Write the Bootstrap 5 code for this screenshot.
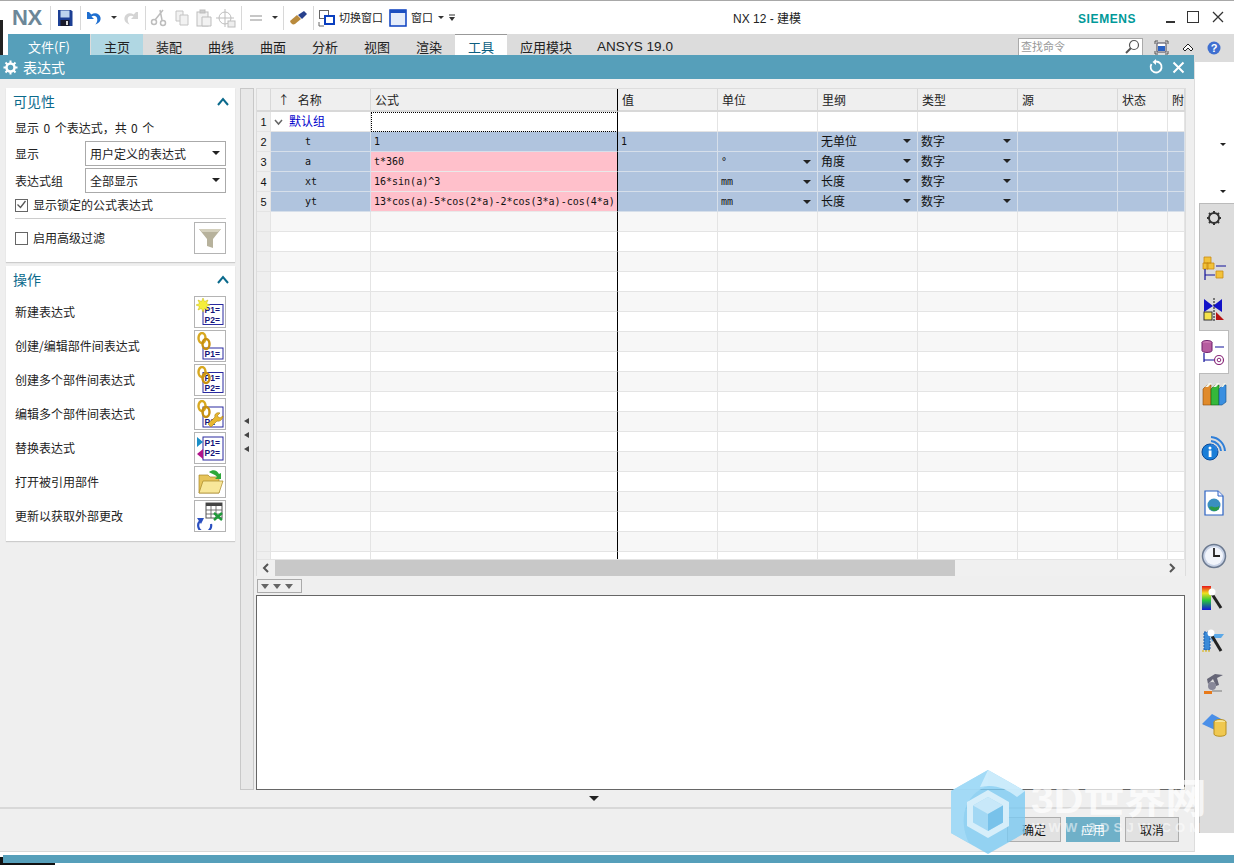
<!DOCTYPE html>
<html lang="zh">
<head>
<meta charset="utf-8">
<title>NX 12 - 建模</title>
<link rel="stylesheet" href="https://cdn.jsdelivr.net/npm/bootstrap@5.3.0/dist/css/bootstrap.min.css">
<style>
html,body{margin:0;background:#fff;overflow:hidden}
body{font-family:"Noto Sans CJK SC","Liberation Sans",sans-serif;font-size:12px;color:#222}
.stage{width:1234px;height:865px;overflow:hidden;background:#fff}
.nxwin{padding-left:3px;height:865px;border-top:1px solid #a8a8a8}
.edge-black{left:0;top:20px;width:3px;height:35px;background:#222}
.qat{height:33px;padding-left:9px;color:#222;font-size:11px}
.nxlogo{font:bold 22px "Liberation Sans",sans-serif;color:#6d8798;width:34px;letter-spacing:-.5px}
.qsep{width:1px;height:24px;background:#d8d8d8;margin:0 3px 0 4px;flex:none}
.qi{width:22px;height:22px;flex:none}
.qd{width:0;height:0;border-left:3px solid transparent;border-right:3px solid transparent;border-top:3px solid #333;margin:0 2px 0 5px;flex:none}
.qd-n{margin-right:1px}
.qtight{margin-left:-2px}
.qgap{margin-left:2px}
.qgap4{margin-left:4px}
.wintitle{left:733px;top:10px;font-size:12px;font-family:"Liberation Sans","Noto Sans CJK SC",sans-serif}
.siemens{left:1078px;top:12px;font:bold 12px "Liberation Sans",sans-serif;color:#099;letter-spacing:.6px}
.winbtn{top:10px;width:14px;height:14px}
.wb1{left:1164px}.wb2{left:1186px}.wb3{left:1211px}
.ribbon{height:28px;background:#dcdcdc;margin-left:5px;padding-bottom:7px;font-size:13px}
.rtab{height:21px;width:52px;text-align:center;line-height:25px;flex:none}
.rtab-file{width:82px;background:#569fba;color:#fff;height:21px}
.rtab-home{background:#b0d7e3;margin-left:1px}
.rtab-on{background:#fff;border-top:1px solid #999;color:#0b5e7f;line-height:23px}
.rtab-wide{width:78px}
.rtab-ansys{width:100px;font-family:"Liberation Sans",sans-serif;font-size:13.500px}
.findbox{left:1018px;top:38px;width:125px;height:18px;border:1px solid #aaa;background:#fff;color:#999;font-size:11px;line-height:15px;padding-left:2px}
.fb-ic{right:2px;top:0}
.ic-a{left:1154px;top:40px}.ic-b{left:1181px;top:43px}.ic-c{left:1207px;top:41px}
.rbar{width:35px}
.rbar-top{height:141px;position:relative}
.rmark{position:absolute;right:8px;width:0;height:0;border-left:3px solid transparent;border-right:3px solid transparent;border-top:3px solid #222}
.rm1{top:81px}.rm2{top:128px}
.rbar-list{background:#dcdcdc;border-top:1px solid #bbb;border-left:1px solid #bbb;height:630px}
.ri{height:28px;display:flex;align-items:center;justify-content:center;padding-right:6px}
.ri svg{width:26px;height:26px}
.ri:nth-child(2){margin-top:23px}.ri:nth-child(3){margin-top:13px}
.ri:nth-child(4){margin-top:6px;height:44px;background:#fff;border:1px solid #bbb;border-left:0;margin-right:5px;padding-right:1px;margin-left:-1px}
.ri:nth-child(5){margin-top:7px}.ri:nth-child(6){margin-top:25px}.ri:nth-child(7){margin-top:27px}
.ri:nth-child(8){margin-top:25px}.ri:nth-child(9){margin-top:14px}.ri:nth-child(10){margin-top:15px}
.ri:nth-child(11){margin-top:13px}.ri:nth-child(12){margin-top:14px}

.dlg{left:0;top:55px;width:1195px;height:797px;background:#efefef;border-right:1px solid #ddd;border-bottom:1px solid #d8d8d8}
.dlg-title{height:24px;background:#569fba;color:#fff;font-size:14px;padding:0 9px 0 2px}
.dlg-main{height:711px;padding:9px 0 0 6px}
.panelcol{width:229px;gap:4px}
.pcard{border:0;border-radius:0;box-shadow:0 1px 1px #ccc;background:#fff}
.pc1{height:174px}.pc2{height:275px}
.phead{height:26px;font-size:14px;color:#0b6a8c;padding:0 6px 0 7px}
.pbody{padding:0 9px}
.sumline{padding-top:5px;margin-bottom:4px;word-spacing:1.800px}
.lbl{width:70px;flex:none}
.selrow{margin-bottom:2px}
.selbox.form-select{width:141px;height:25px;min-height:0;border:1px solid #aaa;border-radius:0;padding:0 0 0 4px;font-size:12px;color:#222;background-image:none;line-height:23px;box-shadow:none}
.selwrap{position:relative}
.selwrap::after{content:"";position:absolute;right:6px;top:10px;border-left:4px solid transparent;border-right:4px solid transparent;border-top:4px solid #222;pointer-events:none}
.cbx.form-check-input{width:13px;height:13px;margin:0 5px 0 0;border:1px solid #666;border-radius:0;float:none;background-color:#fff;flex:none}
.cbx.form-check-input:checked{background-color:#fff;border-color:#666;background-image:none}
.rowlock{position:relative;margin-top:3px}
.ticksvg{position:absolute;left:1px;top:3px;width:11px;height:11px}
.pdiv{border-top:1px solid #ccc;margin:4px 0 3px}
.actbtn.btn{width:32px;height:32px;padding:0;border:1px solid #b4b4b4;border-radius:0;background:#fff;flex:none;display:flex;align-items:center;justify-content:center}
.actbtn svg{width:28px;height:28px}
.actbtn text{font:bold 8.500px "Liberation Sans",sans-serif;fill:#14147a}
.actrow{height:32px;margin-bottom:2px}
.splitter{width:14px;height:702px;margin:0 2px 0 5px;background:#e8e8e8;border:1px solid #c8c8c8;padding-top:329px;gap:8px}
.spl{width:0;height:0;border-top:3.500px solid transparent;border-bottom:3.500px solid transparent;border-right:5px solid #444;margin-left:3px}
.rightcol{width:930px}
.gridbox{height:488px;border:1px solid #ddd;background:#fff}
.gridscroll{height:470px;overflow:hidden}
.xtbl.table{width:928px;table-layout:fixed;border-collapse:separate;border-spacing:0;margin:0;--bs-table-bg:transparent;font-family:"DejaVu Sans Mono","Noto Sans CJK SC",monospace;font-size:10px;color:#111}
.xtbl th,.xtbl td{height:20px;padding:1px 3px 0;border:0;border-right:1px solid #e4e4e4;border-bottom:1px solid #e4e4e4;vertical-align:middle;white-space:nowrap;overflow:hidden;box-shadow:none;line-height:16px;font-weight:400}
.xtbl thead th{height:23px;padding:0 3px 0 4px;background:#efefef;font-family:"Noto Sans CJK SC",sans-serif;font-size:12px;color:#222;border-bottom:2px solid #d8d8d8;border-right:1px solid #d8d8d8}
.xtbl tbody th{background:#efefef;text-align:center;font-family:"Liberation Sans",sans-serif;font-size:11px;padding:0}
.xtbl .c-f{border-right:1px solid #000}
.xtbl tr.em:nth-child(even) td{background:#f7f7f7}
.xtbl td.nm{padding-left:34px}
.xtbl td.blu{background:#b0c4de;border-color:#d6dfea}
.xtbl td.pnk{background:#ffc0cb;border-bottom-color:#e9e9e9}
.xtbl td.c-f{border-right-color:#000}
.c0{width:14px}.c1{width:100px}.c2{width:247px}.c3{width:100px}.c4{width:100px}.c5{width:100px}.c6{width:100px}.c7{width:100px}.c8{width:50px}.c9{width:17px}
.xtbl td.grp{font-family:"Noto Sans CJK SC",sans-serif;font-size:12px;color:#00c;padding:0 3px 1px}
.grp-ch{margin-right:6px}
.xtbl td.zh{font-family:"Noto Sans CJK SC",sans-serif;font-size:12px;padding:0 3px 1px}
.xtbl td.dot{outline:1px dotted #000;outline-offset:-1px}
.dd{position:relative;display:block}
.dd::after{content:"";position:absolute;right:3px;top:6px;border-left:4px solid transparent;border-right:4px solid transparent;border-top:4px solid #222}
.hscroll{height:17px;background:#f0f0f0;padding:0 4px 0 0;border-top:1px solid #e4e4e4}
.hthumb{height:16px;width:680px;background:#c8c8c8}
.harrow{width:18px;color:#555;text-align:center;flex:none;line-height:0}
.hflex{flex:1}
.togbtn{width:45px;height:14px;margin:3px 0 2px 1px;border:1px solid #aaa;gap:4px;padding-left:3px;background:#efefef}
.tgl{width:0;height:0;border-left:4px solid transparent;border-right:4px solid transparent;border-top:5px solid #666}
.notes.form-control{flex:1;border:1px solid #666;background:#fff;margin:0;border-radius:0;width:929px;padding:0;box-shadow:none;resize:none;min-height:0}
.dlg-expand{height:17px;width:100%;padding-right:6px}
.expt{width:0;height:0;border-left:5px solid transparent;border-right:5px solid transparent;border-top:5px solid #222}
.dlg-foot{border-top:2px solid #d8d8d8;padding:8px 15px 0 0;gap:5px}
.dbtn.btn{width:54px;height:25px;border:1px solid #adadad;background:#e1e1e1;color:#111;border-radius:0;padding:0;font-size:12px;line-height:22px}
.dbtn-pri.btn{background:#6fb0c8;border-color:#6fb0c8;color:#fff}
.wm{left:950px;top:770px;width:262px;height:84px;pointer-events:none}
.wm-hex{width:76px;height:84px;display:block}
.wm-txt{left:81px;top:9px;font:bold 41px "Liberation Sans","Noto Sans CJK SC",sans-serif;color:rgba(255,255,255,.72);white-space:nowrap;line-height:40px}
.wm-url{left:82px;top:50px;font:bold 13px "Liberation Sans",sans-serif;letter-spacing:4.200px;color:rgba(255,255,255,.55);white-space:nowrap}
.tstrip{left:3px;right:0;top:855px;height:8px;background:#569fba}
.tblack{left:0;top:857px;width:3px;height:8px;background:#111}
.tblack2{left:0;top:863px;width:55px;height:2px;background:#111}
</style>
</head>
<body>
<div class="stage position-relative">
  <div class="edge-black position-absolute"></div>

  <div class="nxwin d-flex flex-column">
    <!-- quick access toolbar -->
    <div class="qat d-flex align-items-center">
      <div class="nxlogo">NX</div>
      <div class="qsep"></div>
      <svg class="qi" viewBox="0 0 22 22"><path d="M4 3h13l1.500 1.500V19H4z" fill="#1c3f94"/><rect x="6.500" y="3.500" width="9" height="7" fill="#bcd3ee"/><rect x="6.500" y="13" width="9" height="6" fill="#1a1a2a"/><rect x="12" y="14" width="2" height="4" fill="#ddd"/></svg>
      <div class="qsep"></div>
      <svg class="qi" viewBox="0 0 22 22"><path d="M3 5v7h7L7.500 9.500c2.700-1.700 5.700-.2 5.800 2.900.1 2-.8 3.700-2 5.100 3.900-1.200 5.800-3.900 5.200-7C15.800 6.500 11 4.800 7.300 7.400L5 5z" fill="#1f6fd0"/></svg>
      <div class="qd"></div>
      <svg class="qi" viewBox="0 0 22 22"><path d="M19 5v7h-7l2.500-2.500c-2.700-1.700-5.700-.2-5.800 2.900-.1 2 .8 3.700 2 5.100-3.900-1.200-5.800-3.900-5.200-7 .7-4 5.500-5.700 9.200-3.100L17 5z" fill="#d4d4d4"/></svg>
      <div class="qsep"></div>
      <svg class="qi qtight" viewBox="0 0 22 22" fill="none" stroke="#bdbdbd" stroke-width="1.500"><path d="M16 3L8 13M13 3l2 10"/><circle cx="7" cy="15" r="2.500"/><circle cx="16" cy="16" r="2.500"/></svg>
      <svg class="qi qgap" viewBox="0 0 22 22" fill="#f2f2f2" stroke="#c4c4c4"><path d="M5 4h7v10H5z"/><path d="M9 8h8v10H9z"/></svg>
      <svg class="qi" viewBox="0 0 22 22" fill="#f2f2f2" stroke="#bdbdbd"><rect x="4" y="5" width="11" height="14"/><rect x="7" y="3" width="5" height="3" fill="#ccc"/><path d="M9 10h9v9H9z"/></svg>
      <svg class="qi" viewBox="0 0 22 22" fill="none" stroke="#bdbdbd"><circle cx="10" cy="11" r="6"/><path d="M10 2v18M1 11h18"/><rect x="13" y="14" width="7" height="6" fill="#eee"/></svg>
      <div class="qsep"></div>
      <svg class="qi" viewBox="0 0 22 22" fill="none" stroke="#b5b5b5" stroke-width="1.500"><path d="M5 9h12M5 13h12"/></svg>
      <div class="qd qd-n"></div>
      <div class="qsep"></div>
      <svg class="qi" viewBox="0 0 22 22"><path d="M3 14l7-6 4 4-6 5c-2 1-4 0-5-3z" fill="#b98a3c"/><path d="M11 8l6-4 3 3-5 5z" fill="#28408c"/></svg>
      <div class="qsep"></div>
      <svg class="qi" viewBox="0 0 22 22"><rect x="2.500" y="3.500" width="9" height="8" fill="#fff" stroke="#666"/><rect x="8" y="9" width="9" height="8" fill="#fff" stroke="#0a3fc0" stroke-width="2"/><path d="M2 15v4h5" fill="none" stroke="#666"/></svg>
      <span>切换窗口</span>
      <svg class="qi qgap4" viewBox="0 0 22 22"><rect x="3" y="3" width="16" height="16" fill="#e4ecfa" stroke="#0a3fc0" stroke-width="1.500"/><rect x="3" y="3" width="16" height="3" fill="#1b4fc0"/></svg>
      <span class="qgap">窗口</span>
      <div class="qd"></div>
      <svg class="qgap" width="8" height="8" viewBox="0 0 8 8"><path d="M1 1h6" stroke="#333"/><path d="M1 3h6L4 7z" fill="#333"/></svg>
    </div>
    <!-- ribbon -->
    <div class="ribbon d-flex align-items-start">
      <div class="rtab rtab-file">文件(F)</div>
      <div class="rtab rtab-home">主页</div>
      <div class="rtab">装配</div>
      <div class="rtab">曲线</div>
      <div class="rtab">曲面</div>
      <div class="rtab">分析</div>
      <div class="rtab">视图</div>
      <div class="rtab">渲染</div>
      <div class="rtab rtab-on">工具</div>
      <div class="rtab rtab-wide">应用模块</div>
      <div class="rtab rtab-ansys">ANSYS 19.0</div>
    </div>
    <!-- resource bar -->
    <div class="d-flex justify-content-end flex-grow-1">
      <div class="rbar d-flex flex-column">
        <div class="rbar-top"><span class="rmark rm1"></span><span class="rmark rm2"></span></div>
        <div class="rbar-list">
          <div class="ri"><svg viewBox="0 0 26 26"><circle cx="13" cy="13" r="5" fill="none" stroke="#333" stroke-width="2"/><path d="M13 6v3M13 17v3M6 13h3M17 13h3M8 8l2 2M16 16l2 2M8 18l2-2M16 10l2-2" stroke="#333" stroke-width="2"/></svg></div>
          <div class="ri"><svg viewBox="0 0 26 26"><path d="M3 1h7v6H3zM6 7h7v6H6zM2 7h5v6H2z" fill="#f2c23a" stroke="#c98a12" stroke-width=".8"/><path d="M15 15h7v7h-7z" fill="#f2c23a" stroke="#c98a12" stroke-width=".8"/><path d="M4 13v11M4 19h10M15 10h10" stroke="#12129a" stroke-width="1.200" fill="none"/></svg></div>
          <div class="ri"><svg viewBox="0 0 26 26"><path d="M3 2l9 7 9-7v13l-9-6-9 6z" fill="#1212c8"/><path d="M13 1v24" stroke="#111" stroke-dasharray="2 1"/><rect x="3" y="15" width="8" height="8" fill="#f6e44a" stroke="#333"/><path d="M15 15l8 8h-8z" fill="#b81414"/></svg></div>
          <div class="ri"><svg viewBox="0 0 26 26"><ellipse cx="7" cy="3.500" rx="5" ry="2" fill="#d883bd" stroke="#6b1d6b"/><path d="M2 3.500v8c0 2.600 10 2.600 10 0v-8" fill="#b65ca0" stroke="#6b1d6b"/><path d="M4 14v9M4 21h10M15 8h9" stroke="#12129a" stroke-width="1.200" fill="none"/><circle cx="19" cy="21" r="4.500" fill="none" stroke="#8a2a7a" stroke-width="1.200"/><circle cx="19" cy="21" r="1.800" fill="none" stroke="#8a2a7a"/></svg></div>
          <div class="ri"><svg viewBox="0 0 26 26"><path d="M2 7l4-4h4v20H2z" fill="#e08a2a" stroke="#8a4a0a" stroke-width=".6"/><path d="M10 7l4-4h4v20h-8z" fill="#35b83a" stroke="#126012" stroke-width=".6"/><path d="M18 7l4-4h3v17l-4 3h-3z" fill="#3a8fe0" stroke="#12508a" stroke-width=".6"/><path d="M4 5l4-4h3L7 5zM12 5l4-4h3l-4 4zM20 5l3-4h2l-3 4z" fill="#f4f4e8"/></svg></div>
          <div class="ri"><svg viewBox="0 0 26 26"><circle cx="9" cy="17" r="8" fill="#1a7ed8" stroke="#0a4a9a"/><circle cx="9" cy="13" r="1.500" fill="#fff"/><rect x="7.700" y="15.500" width="2.800" height="6.500" fill="#fff"/><path d="M10 6a11 11 0 0 1 10 10M10 2a15 15 0 0 1 14 14M10 10a7 7 0 0 1 6 6" fill="none" stroke="#2f7fd8" stroke-width="2"/></svg></div>
          <div class="ri"><svg viewBox="0 0 26 26"><path d="M4 1h13l5 5v19H4z" fill="#fff" stroke="#2a62c4" stroke-width="1.200"/><path d="M17 1v5h5" fill="#eef" stroke="#2a62c4"/><circle cx="13" cy="15" r="6.500" fill="#3a8fc0"/><path d="M8 17c3-2 6 2 10-1v3c-3 3-8 3-10-2z" fill="#2c9a48"/></svg></div>
          <div class="ri"><svg viewBox="0 0 26 26"><circle cx="13" cy="13" r="11.500" fill="#c9d3e6" stroke="#6c7a90" stroke-width="1.500"/><circle cx="13" cy="13" r="9" fill="#f2f5fb"/><path d="M13 5v8h6" fill="none" stroke="#222" stroke-width="1.800"/></svg></div>
          <div class="ri"><svg viewBox="0 0 26 26"><defs><linearGradient id="rb" x1="0" y1="0" x2="0" y2="1"><stop offset="0" stop-color="#e8141a"/><stop offset=".3" stop-color="#f0e020"/><stop offset=".6" stop-color="#28c83a"/><stop offset="1" stop-color="#1414d8"/></linearGradient></defs><rect x="1" y="1" width="9" height="24" fill="url(#rb)"/><path d="M11 9l9 14" stroke="#222" stroke-width="3"/><circle cx="11" cy="7" r="3.500" fill="#fff"/></svg></div>
          <div class="ri"><svg viewBox="0 0 26 26"><path d="M3 4h6v18H3z" fill="#3a8ad8" stroke="#1a5aa8" stroke-dasharray="2 1"/><path d="M9 6h14l-3 4h-6l-3 4z" fill="#5aa8e8"/><path d="M11 8l9 15" stroke="#222" stroke-width="3"/><circle cx="10" cy="5" r="3.500" fill="#fff"/><path d="M1 23h9" stroke="#e0c040" stroke-width="1.500" stroke-dasharray="2 1"/></svg></div>
          <div class="ri"><svg viewBox="0 0 26 26"><path d="M6 10l8-5 8 1-6 3 2 7-3 1-3-7-5 5z" fill="#667"/><circle cx="11" cy="17" r="4" fill="#889"/><path d="M3 22h8v3H3z" fill="#e87a1a"/><path d="M11 22h10" stroke="#aaa" stroke-width="2"/></svg></div>
          <div class="ri"><svg viewBox="0 0 26 26"><path d="M1 13L11 3l11 6-8 10z" fill="#4a8fe8"/><ellipse cx="19" cy="11" rx="6" ry="2.500" fill="#f8e69a" stroke="#b89020"/><path d="M13 11v12c0 3 12 3 12 0V11" fill="#f0c850" stroke="#b89020"/></svg></div>
        </div>
      </div>
    </div>
  </div>

  <div class="wintitle position-absolute">NX 12 - 建模</div>
  <div class="siemens position-absolute">SIEMENS</div>
  <svg class="winbtn wb1 position-absolute" viewBox="0 0 14 14"><path d="M2 12h9" stroke="#333" stroke-width="2"/></svg>
  <svg class="winbtn wb2 position-absolute" viewBox="0 0 14 14"><rect x="1.500" y="1.500" width="11" height="11" fill="none" stroke="#333"/></svg>
  <svg class="winbtn wb3 position-absolute" viewBox="0 0 14 14"><path d="M2 2l10 10M12 2L2 12" stroke="#333" stroke-width="1.300"/></svg>
  <div class="findbox position-absolute">查找命令
    <svg class="fb-ic position-absolute" width="16" height="16" viewBox="0 0 16 16"><circle cx="10" cy="6" r="4.500" fill="#fff" stroke="#555" stroke-width="1.200"/><path d="M7 9l-5 5" stroke="#555" stroke-width="2"/></svg>
  </div>
  <svg class="ic-a position-absolute" width="15" height="15" viewBox="0 0 15 15"><path d="M1 4V1h3M11 1h3v3M14 11v3h-3M4 14H1v-3" fill="none" stroke="#555"/><rect x="3" y="3" width="9" height="9" fill="#fff" stroke="#445"/><rect x="4" y="6" width="7" height="5" fill="#2a62c4"/></svg>
  <svg class="ic-b position-absolute" width="14" height="12" viewBox="0 0 14 12"><path d="M2 6l5-5 5 5-2 2-3-3-3 3z" fill="#fff" stroke="#222"/></svg>
  <svg class="ic-c position-absolute" width="14" height="14" viewBox="0 0 14 14"><circle cx="7" cy="7" r="6.500" fill="#3f6fd0"/><text x="7" y="11" font-size="11" font-weight="700" fill="#fff" text-anchor="middle" font-family="Liberation Sans">?</text></svg>

  <!-- dialog -->
  <div class="dlg position-absolute d-flex flex-column">
    <div class="dlg-title d-flex align-items-center">
      <svg width="17" height="17" viewBox="0 0 17 17"><circle cx="8.500" cy="8.500" r="4" fill="none" stroke="#fff" stroke-width="2.500"/><path d="M8.500 1.500v3M8.500 12.500v3M1.500 8.500h3M12.500 8.500h3M3.500 3.500l2 2M11.500 11.500l2 2M3.500 13.500l2-2M11.500 5.500l2-2" stroke="#fff" stroke-width="2"/></svg>
      <span class="ms-1">表达式</span>
      <svg class="ms-auto" width="16" height="16" viewBox="0 0 16 16"><path d="M3.500 5A5.500 5.500 0 1 0 8 2.500" fill="none" stroke="#fff" stroke-width="1.800"/><path d="M8 0v6L4.500 3z" fill="#fff"/></svg>
      <svg class="ms-2" width="13" height="13" viewBox="0 0 13 13"><path d="M1.500 1.500l10 10M11.500 1.500l-10 10" stroke="#fff" stroke-width="2"/></svg>
    </div>

    <div class="dlg-main d-flex">
      <div class="panelcol d-flex flex-column">
        <div class="card pcard pc1">
          <div class="phead d-flex align-items-center justify-content-between">
            <span>可见性</span>
            <svg width="12" height="9" viewBox="0 0 12 9"><path d="M1 8l5-6 5 6" fill="none" stroke="#0b6a8c" stroke-width="2"/></svg>
          </div>
          <div class="pbody">
            <div class="sumline">显示 0 个表达式，共 0 个</div>
            <div class="d-flex align-items-center selrow"><span class="lbl">显示</span><div class="selwrap"><select class="form-select selbox"><option>用户定义的表达式</option></select></div></div>
            <div class="d-flex align-items-center"><span class="lbl">表达式组</span><div class="selwrap"><select class="form-select selbox"><option>全部显示</option></select></div></div>
            <div class="d-flex align-items-center rowlock">
              <input class="form-check-input cbx" type="checkbox" checked>
              <svg class="ticksvg" viewBox="0 0 11 11"><path d="M1.500 5.500l3 3 5-6.500" fill="none" stroke="#555" stroke-width="1.300"/></svg>
              <span>显示锁定的公式表达式</span>
            </div>
            <div class="pdiv"></div>
            <div class="d-flex align-items-center justify-content-between">
              <div class="d-flex align-items-center"><input class="form-check-input cbx" type="checkbox"><span>启用高级过滤</span></div>
              <button class="btn actbtn" type="button"><svg viewBox="0 0 28 28"><path d="M3 5h22l-8 10v9l-6-2v-7z" fill="#b7b29c"/><path d="M3 5h22l-3 3H6z" fill="#d4d0bd"/></svg></button>
            </div>
          </div>
        </div>
        <div class="card pcard pc2">
          <div class="phead d-flex align-items-center justify-content-between">
            <span>操作</span>
            <svg width="12" height="9" viewBox="0 0 12 9"><path d="M1 8l5-6 5 6" fill="none" stroke="#0b6a8c" stroke-width="2"/></svg>
          </div>
          <div class="pbody pt-1">
            <div class="actrow d-flex align-items-center justify-content-between"><span>新建表达式</span>
              <button class="btn actbtn" type="button"><svg viewBox="0 0 28 28"><rect x="7" y="6.500" width="20" height="20" fill="#fff" stroke="#2a2aa0"/><text x="8.500" y="15">P1=</text><text x="8.500" y="24.500">P2=</text><path d="M7 0l1.500 3.500L12 2l-1.500 3.500L14 7l-3.500 1.500L12 12 8.500 10.500 7 14 5.500 10.500 2 12l1.500-3.500L0 7l3.500-1.500L2 2l3.500 1.500z" fill="#f5ee3a" stroke="#c9b810" stroke-width=".5"/></svg></button></div>
            <div class="actrow d-flex align-items-center justify-content-between"><span>创建/编辑部件间表达式</span>
              <button class="btn actbtn" type="button"><svg viewBox="0 0 28 28"><rect x="7" y="16" width="20" height="11" fill="#fff" stroke="#2a2aa0"/><text x="8.500" y="25">P1=</text><ellipse cx="6" cy="6" rx="3.500" ry="5" fill="none" stroke="#d8a820" stroke-width="2.400"/><ellipse cx="10" cy="12" rx="3.500" ry="5" fill="none" stroke="#c89010" stroke-width="2.400"/></svg></button></div>
            <div class="actrow d-flex align-items-center justify-content-between"><span>创建多个部件间表达式</span>
              <button class="btn actbtn" type="button"><svg viewBox="0 0 28 28"><rect x="7" y="6.500" width="20" height="20" fill="#fff" stroke="#2a2aa0"/><text x="8.500" y="15">P1=</text><text x="8.500" y="24.500">P2=</text><ellipse cx="6" cy="6" rx="3.500" ry="5" fill="none" stroke="#d8a820" stroke-width="2.400"/><ellipse cx="10" cy="12" rx="3.500" ry="5" fill="none" stroke="#c89010" stroke-width="2.400"/></svg></button></div>
            <div class="actrow d-flex align-items-center justify-content-between"><span>编辑多个部件间表达式</span>
              <button class="btn actbtn" type="button"><svg viewBox="0 0 28 28"><rect x="7" y="7" width="20" height="20" fill="#fff" stroke="#2a2aa0"/><text x="8.500" y="25">P2</text><ellipse cx="6" cy="6" rx="3.500" ry="5" fill="none" stroke="#d8a820" stroke-width="2.400"/><ellipse cx="10" cy="12" rx="3.500" ry="5" fill="none" stroke="#c89010" stroke-width="2.400"/><path d="M12 24l7-7c-1-3 2-5 5-4l-3 3 3 2 3-2c0 3-3 6-6 5l-6 6z" fill="#e8b830" stroke="#a87a10" stroke-width=".6"/></svg></button></div>
            <div class="actrow d-flex align-items-center justify-content-between"><span>替换表达式</span>
              <button class="btn actbtn" type="button"><svg viewBox="0 0 28 28"><rect x="7" y="3" width="20" height="23" fill="#fff" stroke="#2a2aa0"/><text x="8.500" y="12">P1=</text><text x="8.500" y="22">P2=</text><path d="M1 3l6 5-6 5z" fill="#1a8fc8"/><path d="M7 15v10l-6-5z" fill="#b0128a"/></svg></button></div>
            <div class="actrow d-flex align-items-center justify-content-between"><span>打开被引用部件</span>
              <button class="btn actbtn" type="button"><svg viewBox="0 0 28 28"><path d="M3 7h9l2 2h9v16H3z" fill="#e6c45a" stroke="#a8882a" stroke-width=".7"/><path d="M3 25l4-12h20l-4 12z" fill="#f8e79a" stroke="#a8882a" stroke-width=".7"/><path d="M13 4c4-3 8-2 10 2l2-1v6h-6l2-2c-2-3-5-3-8-5z" fill="#2da83a"/></svg></button></div>
            <div class="actrow d-flex align-items-center justify-content-between"><span>更新以获取外部更改</span>
              <button class="btn actbtn" type="button"><svg viewBox="0 0 28 28"><rect x="10" y="1" width="16" height="15" fill="#fff" stroke="#555"/><path d="M10 1h16v3H10z" fill="#444"/><path d="M15 4v12M20 4v12M10 8h16M10 12h16" stroke="#555" stroke-width=".8"/><path d="M18 11l8 7M26 11l-8 7" stroke="#1f9a3a" stroke-width="2.400"/><path d="M15 22a6.500 6.500 0 1 1-11-3" fill="none" stroke="#2a4fc0" stroke-width="2.200"/><path d="M1 16h7l-3 6z" fill="#2a4fc0"/></svg></button></div>
          </div>
        </div>
      </div>

      <div class="splitter d-flex flex-column"><span class="spl"></span><span class="spl"></span><span class="spl"></span></div>

      <div class="rightcol d-flex flex-column">
        <div class="gridbox">
          <div class="gridscroll">
            <table class="table xtbl">
              <colgroup><col class="c0"><col class="c1"><col class="c2"><col class="c3"><col class="c4"><col class="c5"><col class="c6"><col class="c7"><col class="c8"><col class="c9"></colgroup>
              <thead><tr><th></th><th>&nbsp;<span class="me-2">↑</span>名称</th><th class="c-f">公式</th><th>值</th><th>单位</th><th>里纲</th><th>类型</th><th>源</th><th>状态</th><th>附</th></tr></thead>
              <tbody>
                <tr><th>1</th><td class="grp"><svg class="grp-ch" width="9" height="7" viewBox="0 0 9 7"><path d="M1 1l3.500 4L8 1" fill="none" stroke="#666" stroke-width="1.500"/></svg>默认组</td><td class="c-f dot"></td><td></td><td></td><td></td><td></td><td></td><td></td><td></td></tr>
                <tr><th>2</th><td class="blu nm">t</td><td class="blu c-f">1</td><td class="blu">1</td><td class="blu"></td><td class="blu zh"><span class="dd">无单位</span></td><td class="blu zh"><span class="dd">数字</span></td><td class="blu"></td><td class="blu"></td><td class="blu"></td></tr>
                <tr><th>3</th><td class="blu nm">a</td><td class="pnk c-f">t*360</td><td class="blu"></td><td class="blu"><span class="dd">°</span></td><td class="blu zh"><span class="dd">角度</span></td><td class="blu zh"><span class="dd">数字</span></td><td class="blu"></td><td class="blu"></td><td class="blu"></td></tr>
                <tr><th>4</th><td class="blu nm">xt</td><td class="pnk c-f">16*sin(a)^3</td><td class="blu"></td><td class="blu"><span class="dd">mm</span></td><td class="blu zh"><span class="dd">长度</span></td><td class="blu zh"><span class="dd">数字</span></td><td class="blu"></td><td class="blu"></td><td class="blu"></td></tr>
                <tr><th>5</th><td class="blu nm">yt</td><td class="pnk c-f">13*cos(a)-5*cos(2*a)-2*cos(3*a)-cos(4*a)</td><td class="blu"></td><td class="blu"><span class="dd">mm</span></td><td class="blu zh"><span class="dd">长度</span></td><td class="blu zh"><span class="dd">数字</span></td><td class="blu"></td><td class="blu"></td><td class="blu"></td></tr>
                <tr class="em"><th></th><td></td><td class="c-f"></td><td></td><td></td><td></td><td></td><td></td><td></td><td></td></tr>
                <tr class="em"><th></th><td></td><td class="c-f"></td><td></td><td></td><td></td><td></td><td></td><td></td><td></td></tr>
                <tr class="em"><th></th><td></td><td class="c-f"></td><td></td><td></td><td></td><td></td><td></td><td></td><td></td></tr>
                <tr class="em"><th></th><td></td><td class="c-f"></td><td></td><td></td><td></td><td></td><td></td><td></td><td></td></tr>
                <tr class="em"><th></th><td></td><td class="c-f"></td><td></td><td></td><td></td><td></td><td></td><td></td><td></td></tr>
                <tr class="em"><th></th><td></td><td class="c-f"></td><td></td><td></td><td></td><td></td><td></td><td></td><td></td></tr>
                <tr class="em"><th></th><td></td><td class="c-f"></td><td></td><td></td><td></td><td></td><td></td><td></td><td></td></tr>
                <tr class="em"><th></th><td></td><td class="c-f"></td><td></td><td></td><td></td><td></td><td></td><td></td><td></td></tr>
                <tr class="em"><th></th><td></td><td class="c-f"></td><td></td><td></td><td></td><td></td><td></td><td></td><td></td></tr>
                <tr class="em"><th></th><td></td><td class="c-f"></td><td></td><td></td><td></td><td></td><td></td><td></td><td></td></tr>
                <tr class="em"><th></th><td></td><td class="c-f"></td><td></td><td></td><td></td><td></td><td></td><td></td><td></td></tr>
                <tr class="em"><th></th><td></td><td class="c-f"></td><td></td><td></td><td></td><td></td><td></td><td></td><td></td></tr>
                <tr class="em"><th></th><td></td><td class="c-f"></td><td></td><td></td><td></td><td></td><td></td><td></td><td></td></tr>
                <tr class="em"><th></th><td></td><td class="c-f"></td><td></td><td></td><td></td><td></td><td></td><td></td><td></td></tr>
                <tr class="em"><th></th><td></td><td class="c-f"></td><td></td><td></td><td></td><td></td><td></td><td></td><td></td></tr>
                <tr class="em"><th></th><td></td><td class="c-f"></td><td></td><td></td><td></td><td></td><td></td><td></td><td></td></tr>
                <tr class="em"><th></th><td></td><td class="c-f"></td><td></td><td></td><td></td><td></td><td></td><td></td><td></td></tr>
                <tr class="em"><th></th><td></td><td class="c-f"></td><td></td><td></td><td></td><td></td><td></td><td></td><td></td></tr>
              </tbody>
            </table>
          </div>
          <div class="hscroll d-flex align-items-center">
            <div class="harrow"><svg width="8" height="10" viewBox="0 0 8 10"><path d="M6 1L2 5l4 4" fill="none" stroke="#555" stroke-width="2"/></svg></div>
            <div class="hthumb"></div>
            <div class="hflex"></div>
            <div class="harrow"><svg width="8" height="10" viewBox="0 0 8 10"><path d="M2 1l4 4-4 4" fill="none" stroke="#555" stroke-width="2"/></svg></div>
          </div>
        </div>
        <div class="togbtn d-flex align-items-center"><span class="tgl"></span><span class="tgl"></span><span class="tgl"></span></div>
        <textarea class="form-control notes" aria-label="表达式说明"></textarea>
      </div>
    </div>

    <div class="dlg-expand d-flex justify-content-center align-items-center"><span class="expt"></span></div>
    <div class="dlg-foot d-flex justify-content-end">
      <button class="btn dbtn" type="button">确定</button>
      <button class="btn dbtn dbtn-pri" type="button">应用</button>
      <button class="btn dbtn" type="button">取消</button>
    </div>
  </div>

  <!-- watermark -->
  <div class="wm position-absolute">
    <svg class="wm-hex" viewBox="0 0 76 84"><path d="M38 0l37 21v42L38 84 1 63V21z" fill="#7ccaf3" fill-opacity=".8"/><path d="M38 0L1 21v42l18 10C8 50 14 24 38 16z" fill="#a6dcf7" fill-opacity=".85"/><path d="M38 0l37 21-8 6C55 18 45 14 30 17z" fill="#d0edfc" fill-opacity=".9"/><path d="M38 20l21 12v24L38 68 17 56V32z" fill="#e2f3fc" fill-opacity=".85"/><path d="M38 27l15 8.500v17L38 61l-15-8.500v-17z" fill="#a2d8f4"/><path d="M38 27l15 8.500-15 8.500-15-8.500z" fill="#c8e8f9"/><path d="M38 44l15-8.500v17L38 61z" fill="#78c2ea"/></svg>
    <div class="wm-txt position-absolute">3D世界网</div>
    <div class="wm-url position-absolute">WWW.3DSJW.COM</div>
  </div>

  <div class="tstrip position-absolute"></div>
  <div class="tblack position-absolute"></div>
  <div class="tblack2 position-absolute"></div>
</div>
</body>
</html>
